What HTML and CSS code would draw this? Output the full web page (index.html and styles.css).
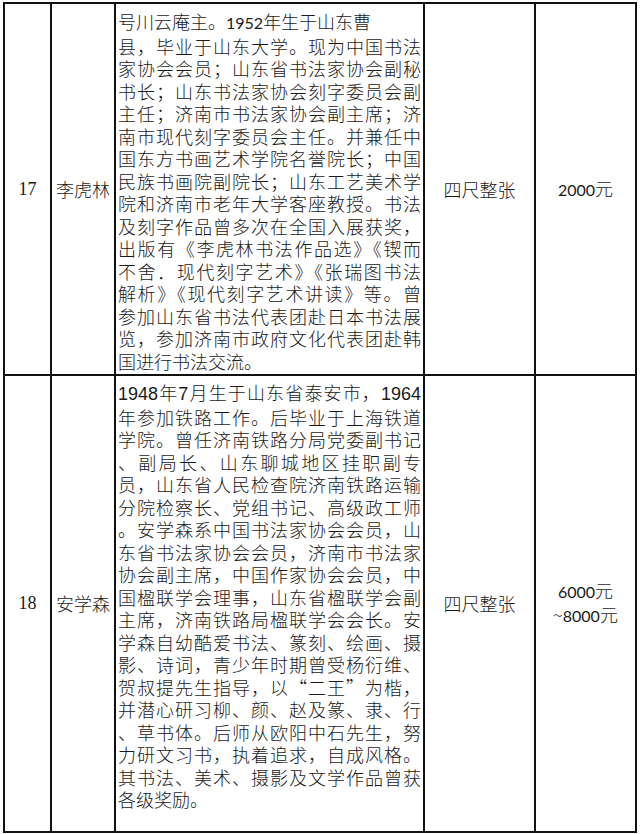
FILE: index.html
```html
<!DOCTYPE html>
<html lang="zh-CN">
<head>
<meta charset="utf-8">
<title>书法家简介</title>
<link rel="stylesheet" href="styles.css">
</head>
<body>
<div class="sheet">
<table class="bio-table">
<colgroup>
<col class="c-no"><col class="c-name"><col class="c-desc"><col class="c-size"><col class="c-price">
</colgroup>
<tbody>
<tr>
<td class="no">17</td>
<td class="name">李虎林</td>
<td class="desc desc-a">
<span class="ln end">号川云庵主。<span class="na">1952</span>年生于山东曹</span>
<span class="ln">县，毕业于山东大学。现为中国书法</span>
<span class="ln">家协会会员；山东省书法家协会副秘</span>
<span class="ln">书长；山东书法家协会刻字委员会副</span>
<span class="ln">主任；济南市书法家协会副主席；济</span>
<span class="ln">南市现代刻字委员会主任。并兼任中</span>
<span class="ln">国东方书画艺术学院名誉院长；中国</span>
<span class="ln">民族书画院副院长；山东工艺美术学</span>
<span class="ln">院和济南市老年大学客座教授。书法</span>
<span class="ln">及刻字作品曾多次在全国入展获奖，</span>
<span class="ln">出版有《李虎林书法作品选》《锲而</span>
<span class="ln">不舍．现代刻字艺术》《张瑞图书法</span>
<span class="ln">解析》《现代刻字艺术讲读》等。曾</span>
<span class="ln">参加山东省书法代表团赴日本书法展</span>
<span class="ln">览，参加济南市政府文化代表团赴韩</span>
<span class="ln end">国进行书法交流。</span>
</td>
<td class="size">四尺整张</td>
<td class="price"><span class="na">2000</span>元</td>
</tr>
<tr>
<td class="no">18</td>
<td class="name">安学森</td>
<td class="desc desc-b">
<span class="ln"><span class="nb">1948</span>年<span class="nb">7</span>月生于山东省泰安市，<span class="nb">1964</span></span>
<span class="ln">年参加铁路工作。后毕业于上海铁道</span>
<span class="ln">学院。曾任济南铁路分局党委副书记</span>
<span class="ln">、副局长、山东聊城地区挂职副专</span>
<span class="ln">员，山东省人民检查院济南铁路运输</span>
<span class="ln">分院检察长、党组书记、高级政工师</span>
<span class="ln">。安学森系中国书法家协会会员，山</span>
<span class="ln">东省书法家协会会员，济南市书法家</span>
<span class="ln">协会副主席，中国作家协会会员，中</span>
<span class="ln">国楹联学会理事，山东省楹联学会副</span>
<span class="ln">主席，济南铁路局楹联学会会长。安</span>
<span class="ln">学森自幼酷爱书法、篆刻、绘画、摄</span>
<span class="ln">影、诗词，青少年时期曾受杨衍维、</span>
<span class="ln">贺叔提先生指导，以“二王”为楷，</span>
<span class="ln">并潜心研习柳、颜、赵及篆、隶、行</span>
<span class="ln">、草书体。后师从欧阳中石先生，努</span>
<span class="ln">力研文习书，执着追求，自成风格。</span>
<span class="ln">其书法、美术、摄影及文学作品曾获</span>
<span class="ln end">各级奖励。</span>
</td>
<td class="size">四尺整张</td>
<td class="price"><span class="na">6000</span>元<br>~<span class="na">8000</span>元</td>
</tr>
</tbody>
</table>
</div>
</body>
</html>
```
FILE: styles.css
```css
html, body {
  margin: 0;
  padding: 0;
  background: #ffffff;
}

.sheet {
  padding: 2px 0 0 3px;
}

.bio-table {
  border-collapse: collapse;
  table-layout: fixed;
  width: 632px;
  color: #1a1a1a;
  font-family: "Noto Sans CJK SC", sans-serif;
  font-size: 18px;
  font-weight: 300;
}

.c-no { width: 47px; }
.c-name { width: 64px; }
.c-desc { width: 309px; }
.c-size { width: 111px; }
.c-price { width: 101px; }

.bio-table td {
  border: 2px solid #111111;
  padding: 0;
  vertical-align: middle;
  text-align: center;
}

.no {
  font-family: "Liberation Serif", serif;
  font-size: 18px;
  font-weight: 400;
}

.name {
  font-size: 18px;
}

.desc {
  vertical-align: top !important;
  text-align: left !important;
  line-height: 22.5px;
}

.desc-a {
  padding: 6px 2px 2px 2px !important;
}

.desc-b {
  padding: 5px 2px 20px 2px !important;
}

.ln {
  display: block;
  text-align: justify;
  text-align-last: justify;
}

.ln.end {
  text-align-last: left;
}

.na {
  font-family: Lato, sans-serif;
  font-size: 16px;
  font-weight: 400;
}

.nb {
  font-family: "Liberation Sans", sans-serif;
  font-weight: 400;
}

.price {
  line-height: 22px;
}
```
